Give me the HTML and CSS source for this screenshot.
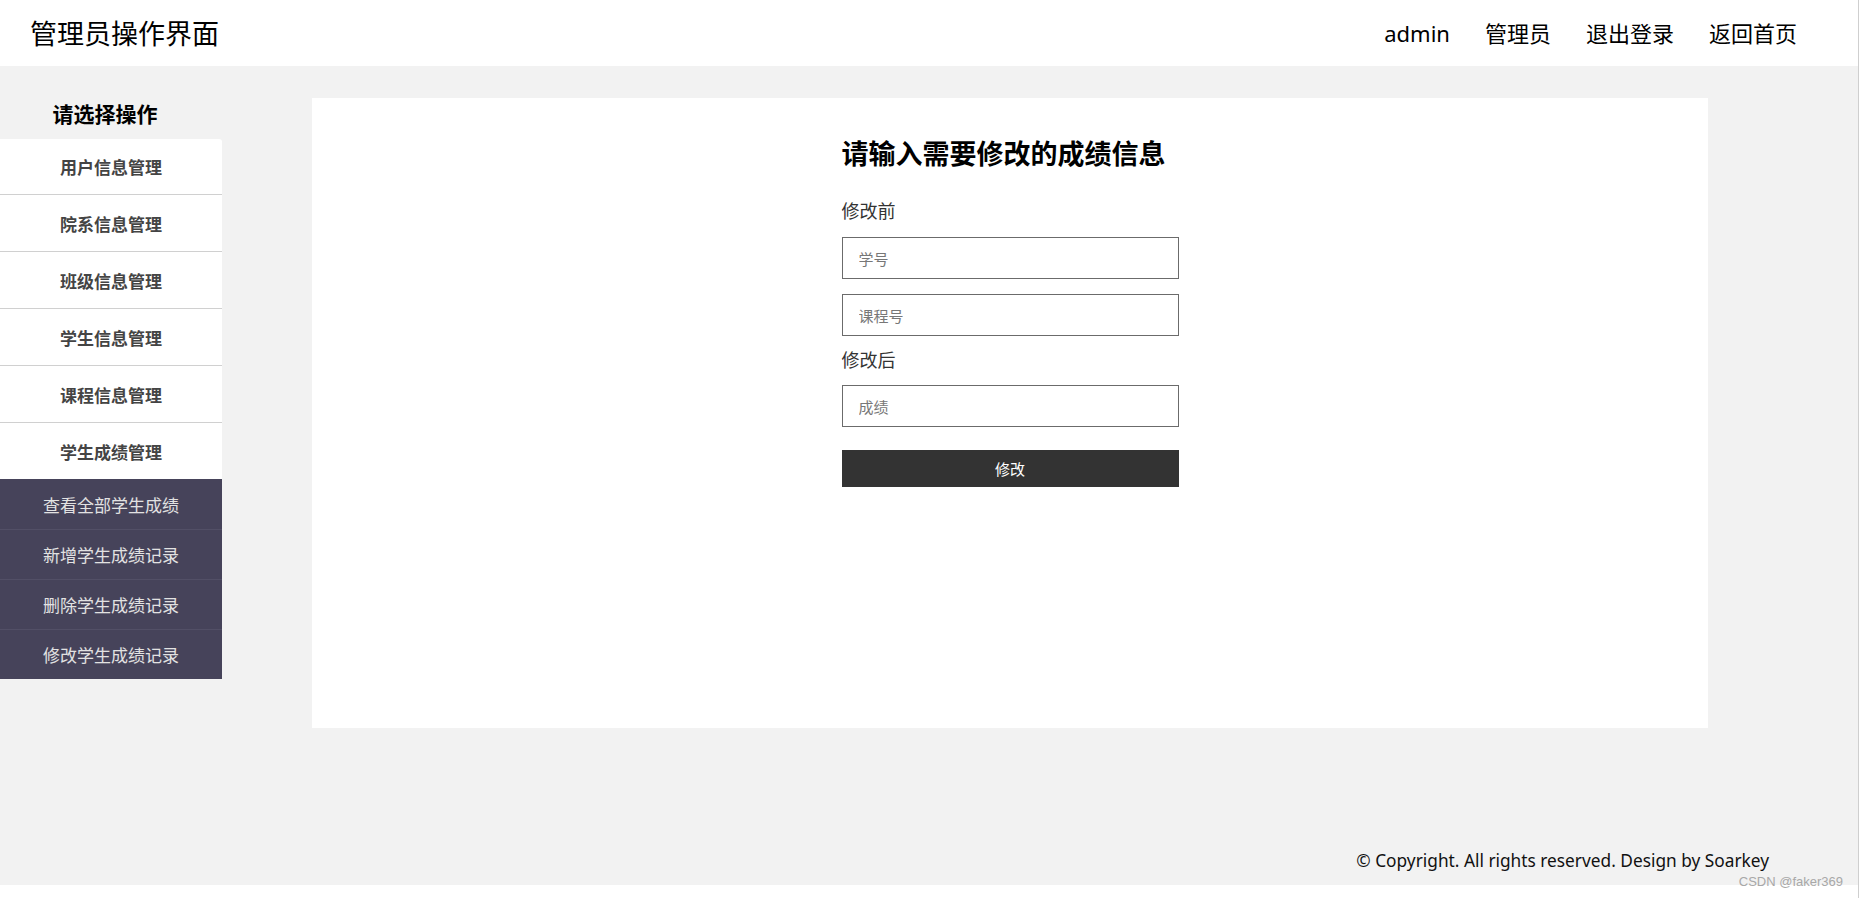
FILE: index.html
```html
<!DOCTYPE html>
<html lang="zh-CN">
<head>
    <meta charset="UTF-8">
    <title>管理员操作界面</title>
    <link rel="stylesheet" href="styles.css">
</head>
<body>
    <div class="wrap">
        <div class="header">
            <div class="logo">管理员操作界面</div>
            <div class="nav">
                <a href="#">admin</a>
                <a href="#">管理员</a>
                <a href="#">退出登录</a>
                <a href="#">返回首页</a>
            </div>
        </div>

        <div class="main">
            <div class="sidebar">
                <div class="side-title">请选择操作</div>
                <ul class="menu">
                    <li class="menu-item">用户信息管理</li>
                    <li class="menu-item">院系信息管理</li>
                    <li class="menu-item">班级信息管理</li>
                    <li class="menu-item">学生信息管理</li>
                    <li class="menu-item">课程信息管理</li>
                    <li class="menu-item">学生成绩管理</li>
                </ul>
                <ul class="submenu">
                    <li class="sub-item">查看全部学生成绩</li>
                    <li class="sub-item">新增学生成绩记录</li>
                    <li class="sub-item">删除学生成绩记录</li>
                    <li class="sub-item">修改学生成绩记录</li>
                </ul>
            </div>

            <div class="content">
                <form class="form">
                    <h2 class="form-title">请输入需要修改的成绩信息</h2>
                    <p class="form-label">修改前</p>
                    <input type="text" class="field" placeholder="学号">
                    <input type="text" class="field" placeholder="课程号">
                    <p class="form-label after">修改后</p>
                    <input type="text" class="field" placeholder="成绩">
                    <button type="button" class="submit">修改</button>
                </form>
            </div>
        </div>

        <div class="footer">© Copyright. All rights reserved. Design by Soarkey</div>
    </div>
    <div class="watermark">CSDN @faker369</div>
</body>
</html>
```

FILE: styles.css
```css
html {
    background-color: #fff;
}
body {
    margin: 0;
    width: 1858px;
    height: 898px;
    border-right: 1px solid #cfcfcf;
    font-family: "Noto Sans", "Noto Sans CJK SC", sans-serif;
    color: #000;
    position: relative;
    overflow: hidden;
}
.wrap {
    height: 885px;
    background-color: #f2f2f2;
    display: flex;
    flex-direction: column;
}
.header {
    height: 66px;
    background-color: #fff;
    display: flex;
    justify-content: space-between;
    align-items: center;
    padding: 0 61px 0 30px;
}
.logo {
    font-family: "Noto Sans CJK SC", sans-serif;
    font-size: 27px;
    line-height: 36px;
}
.nav {
    display: flex;
    gap: 35px;
}
.nav a {
    font-size: 22px;
    line-height: 30px;
    color: #000;
    text-decoration: none;
}
.main {
    display: flex;
    padding-top: 32px;
}
.sidebar {
    width: 222px;
}
.side-title {
    height: 30px;
    line-height: 30px;
    margin-bottom: 11px;
    padding-right: 12px;
    text-align: center;
    font-family: "Noto Sans CJK SC", sans-serif;
    font-size: 21px;
    font-weight: bold;
}
.menu, .submenu {
    list-style: none;
    margin: 0;
    padding: 0;
}
.menu {
    background-color: #fff;
    border-top-right-radius: 3px;
}
.menu-item {
    height: 57px;
    box-sizing: border-box;
    border-top: 1px solid #d0d0d0;
    display: flex;
    justify-content: center;
    align-items: center;
    font-family: "Noto Sans CJK SC", sans-serif;
    font-size: 17px;
    font-weight: bold;
    color: #444;
}
.menu-item:first-child {
    height: 55px;
    border-top: none;
}
.submenu {
    background-color: #46435a;
}
.sub-item {
    height: 50px;
    box-sizing: border-box;
    border-top: 1px solid #524f66;
    display: flex;
    justify-content: center;
    align-items: center;
    font-family: "Noto Sans CJK SC", sans-serif;
    font-size: 17px;
    color: #e2e2e2;
}
.sub-item:first-child {
    border-top: none;
}
.content {
    margin-left: 90px;
    width: 1396px;
    height: 630px;
    background-color: #fff;
}
.form {
    width: 337px;
    margin: 0 auto;
    padding-top: 37px;
    display: flex;
    flex-direction: column;
}
.form-title {
    margin: 0 0 27px;
    font-family: "Noto Sans CJK SC", sans-serif;
    font-size: 27px;
    line-height: 36px;
    font-weight: bold;
}
.form-label {
    margin: 0 0 15px;
    font-family: "Noto Sans CJK SC", sans-serif;
    font-size: 18px;
    line-height: 24px;
    color: #333;
}
.form-label.after {
    margin-top: -4px;
    margin-bottom: 14px;
}
.field {
    height: 42px;
    box-sizing: border-box;
    border: 1px solid #6b6b6b;
    padding: 0 16px;
    margin: 0 0 15px;
    font-family: "Noto Sans CJK SC", sans-serif;
    font-size: 15px;
    color: #333;
    outline: none;
}
.field::placeholder {
    color: #777;
}
.submit {
    height: 37px;
    margin-top: 8px;
    border: none;
    background-color: #333;
    color: #fff;
    font-family: "Noto Sans CJK SC", sans-serif;
    font-size: 15px;
    cursor: pointer;
}
.footer {
    margin-top: auto;
    padding: 0 89px 12px 0;
    text-align: right;
    font-size: 17.3px;
    line-height: 24px;
    color: #111;
}
.watermark {
    position: absolute;
    right: 15px;
    bottom: 8px;
    font-family: "Liberation Sans", sans-serif;
    font-size: 13px;
    line-height: 16px;
    color: #a8a8a8;
}
```
